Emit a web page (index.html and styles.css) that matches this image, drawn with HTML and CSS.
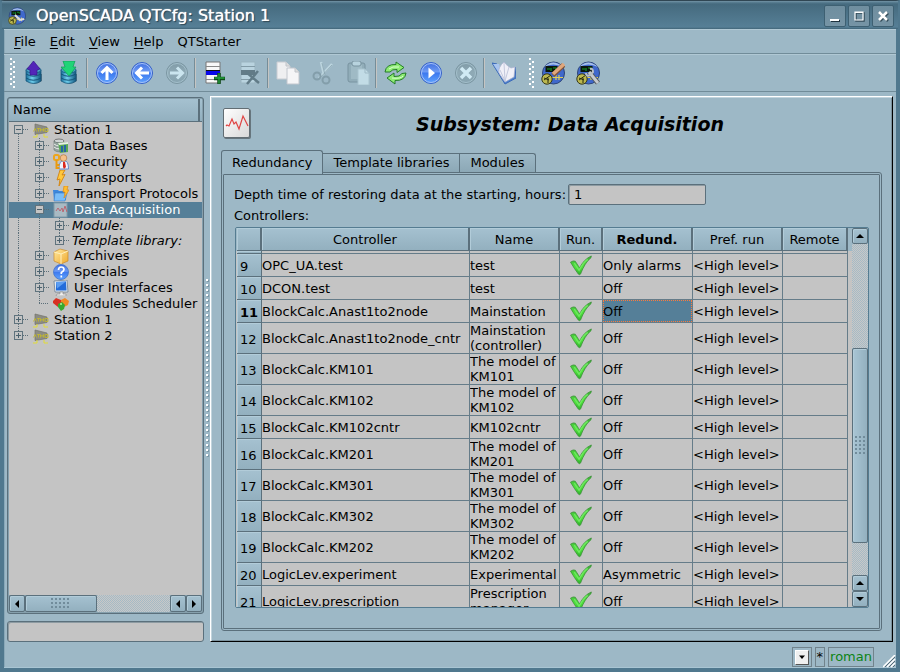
FILE: index.html
```html
<!DOCTYPE html>
<html lang="en">
<head>
<meta charset="utf-8">
<title>OpenSCADA QTCfg: Station 1</title>
<link rel="stylesheet" href="styles.css">
</head>
<body>
<svg class="defs" aria-hidden="true">
  <defs>
    <linearGradient id="gBlue" x1="0" y1="0" x2="0" y2="1"><stop offset="0" stop-color="#3c6ce0"/><stop offset=".45" stop-color="#6f9cf4"/><stop offset=".5" stop-color="#3d78ee"/><stop offset="1" stop-color="#5fa4ff"/></linearGradient>
    <linearGradient id="gDim" x1="0" y1="0" x2="0" y2="1"><stop offset="0" stop-color="#7f9aa6"/><stop offset=".5" stop-color="#8faab6"/><stop offset="1" stop-color="#86a3b0"/></linearGradient>
    <linearGradient id="gDb" x1="0" y1="0" x2="1" y2="0"><stop offset="0" stop-color="#176a96"/><stop offset=".4" stop-color="#6fd0ee"/><stop offset="1" stop-color="#12567e"/></linearGradient>
    <linearGradient id="gCheck" x1="0" y1="0" x2="0" y2="1"><stop offset="0" stop-color="#3fae3a"/><stop offset=".6" stop-color="#4fe23c"/><stop offset="1" stop-color="#2fae2c"/></linearGradient>
    <linearGradient id="gPaper" x1="0" y1="0" x2="1" y2="1"><stop offset="0" stop-color="#fff"/><stop offset="1" stop-color="#d8d8d8"/></linearGradient>
    <linearGradient id="gBox" x1="0" y1="0" x2="1" y2="1"><stop offset="0" stop-color="#ffe9a0"/><stop offset="1" stop-color="#f0a92c"/></linearGradient>
  </defs>
  <symbol id="check" viewBox="0 0 24 22"><path d="M1 7.500Q4 5.500 6 6.500L10.500 13.500Q15 4.500 22.800 1L22.500 2.800Q16 8 11.500 20Q10.500 21.300 9.200 20Q5.500 15 1 7.500Z" fill="url(#gCheck)" stroke="#3b8f37" stroke-width=".8"/><path d="M5 8.500L10 16Q14 8 19 4.500" fill="none" stroke="#6fe860" stroke-width="1.500"/></symbol>
  <symbol id="db" viewBox="0 0 24 24"><path d="M5 13v7q7.500 5.500 15 0v-7Z" fill="#2b4150" opacity=".6"/><path d="M4 9v11q8 5 15 0V9Z" fill="url(#gDb)" stroke="#1a5c80" stroke-width=".8"/><ellipse cx="11.500" cy="9" rx="7.500" ry="3" fill="#4aa0c4" stroke="#1a5c80" stroke-width=".8"/><path d="M4 13q7.500 4.500 15 0M4 17q7.500 4.500 15 0" fill="none" stroke="#145478"/></symbol>
  <symbol id="scada" viewBox="0 0 24 24"><circle cx="12.500" cy="12" r="11" fill="#3f68cc" stroke="#2e4577"/><path d="M3 6Q12 -3 22 6Q12 1 3 6" fill="#a6bfe8"/><rect x="4.500" y="5" width="12" height="6" fill="#0a160d"/><path d="M6 8h3M10 7v3M12 7h3v2" stroke="#159c2c" stroke-width="1.200"/><path d="M11 16.500h11M15 14v5M18 14v5" stroke="#dfcf58" stroke-width="1.200"/><circle cx="6" cy="18" r="5.200" fill="#bcb84f" stroke="#35381c"/><path d="M3 19L10 14M7 17v5M3 17l5 2" stroke="#25290f"/></symbol>
  <symbol id="station" viewBox="0 0 16 16"><path d="M2 2L14 5V10.500L2 12.500Z" fill="#8c8c84" stroke="#73736c" stroke-width=".7"/><path d="M.5 9.500l1.500-3 1.500 3M4 6.500h3M5.500 6.500v3M7.500 9.500v-3l1.500 2 1.500-2v3M12 6.500h3v3h-3z" fill="none" stroke="#c0b532" stroke-width=".9"/><path d="M0 15h4v-3M11 12v3h4" fill="none" stroke="#e2dc34"/></symbol>
  <symbol id="wave" viewBox="0 0 28 31"><rect x="1" y="1" width="27" height="30" rx="2" fill="#66757d"/><rect x=".5" y=".5" width="26" height="29" rx="1.500" fill="url(#gPaper)" stroke="#626d73"/><path d="M3 18l1-1 2 1 3-7 2 5 2-2 3 7 4-13 5 10" fill="none" stroke="#e04444" stroke-width="1.200"/></symbol>
</svg>

<div class="window">
<header class="titlebar">
  <svg class="app-icon"><use href="#scada"/><path d="M7 8l5 5 4-1" stroke="#ddd" stroke-width="2" fill="none"/></svg>
  <h1>OpenSCADA QTCfg: Station 1</h1>
  <button class="win-btn" aria-label="Minimize"><svg width="20" height="20"><path d="M6 15h9" stroke="#1f333f" stroke-width="2"/><path d="M5 14h9" stroke="#fff" stroke-width="2"/></svg></button>
  <button class="win-btn" aria-label="Maximize"><svg width="20" height="20"><path d="M7 7h8v8h-8z" stroke="#344c59" fill="none" stroke-width="1.500"/><path d="M6 6h8v8h-8zM5.500 6.500h9" stroke="#fff" fill="none" stroke-width="1.200"/></svg></button>
  <button class="win-btn" aria-label="Close"><svg width="20" height="20"><path d="M7 7l8 8M15 7l-8 8" stroke="#344c59" stroke-width="2.500"/><path d="M6 6l8 8M14 6l-8 8" stroke="#fff" stroke-width="2.500"/></svg></button>
</header>

<nav class="menubar">
  <button><u>F</u>ile</button><button><u>E</u>dit</button><button><u>V</u>iew</button><button><u>H</u>elp</button><button>QTStarter</button>
</nav>

<div class="toolbar" role="toolbar">
  <span class="handle"></span>
  <button aria-label="Load"><svg><use href="#db"/><path d="M11.500 0L18 8l-3 1v5H8V9L5 8Z" fill="#5325b8" stroke="#38178c" stroke-width=".7"/></svg></button>
  <button aria-label="Save"><svg><use href="#db"/><path d="M6 0h12l-2 6h3L12 15 4 6h4Z" fill="#1fd477" stroke="#109a58" stroke-width=".7"/></svg></button>
  <span class="sep"></span>
  <button aria-label="Up"><svg><circle cx="12" cy="12" r="10.500" fill="url(#gBlue)" stroke="#3762c8"/><circle cx="12" cy="12" r="9.500" fill="none" stroke="#a6c2f8"/><path d="M12 19V7M6.500 12L12 6.500 17.500 12" fill="none" stroke="#fff" stroke-width="3"/></svg></button>
  <button aria-label="Previous"><svg><circle cx="12" cy="12" r="10.500" fill="url(#gBlue)" stroke="#3762c8"/><circle cx="12" cy="12" r="9.500" fill="none" stroke="#a6c2f8"/><path d="M19 12H7M12 6.500L6.500 12 12 17.500" fill="none" stroke="#fff" stroke-width="3"/></svg></button>
  <button aria-label="Next"><svg><circle cx="12" cy="12" r="10.500" fill="url(#gDim)" stroke="#7b96a2"/><circle cx="12" cy="12" r="9.500" fill="none" stroke="#a3bfcb"/><path d="M5 12H17M12 6.500L17.500 12 12 17.500" fill="none" stroke="#cbe5ef" stroke-width="3"/></svg></button>
  <span class="sep"></span>
  <button aria-label="Add item"><svg><path d="M3 1h14v21H3z" fill="#f8f8f8" stroke="#777"/><path d="M3 5.500h14M3 18.500h14" stroke="#888"/><path d="M3 10h14v4H3z" fill="#0909e8"/><path d="M3 9.500h14" stroke="#111"/><path d="M16 12v11M11 17.500h11" stroke="#0c4a17" stroke-width="3.500"/><path d="M16 12.500v10M11.500 17h10" stroke="#25a33e" stroke-width="1.300"/></svg></button>
  <button aria-label="Delete item"><svg><path d="M3 1h14v21H3z" fill="#b9d3df" stroke="#9bb5c1"/><path d="M3 5.500h14M3 18.500h14" stroke="#829ba7"/><path d="M3 9h14v5H3z" fill="#627b87"/><path d="M8 11l13 11M20 10L9 23" stroke="#617b87" stroke-width="2.500"/></svg></button>
  <span class="sep"></span>
  <button aria-label="Copy"><svg><path d="M1 1h9l4 4v13H1z" fill="#efeff1" stroke="#c9ccd2"/><path d="M10 1v4h4" fill="#ddd" stroke="#c0c4ca"/><path d="M11 7h8l4 4v12H11z" fill="#f5f5f7" stroke="#c2c6cd"/><path d="M19 7v4h4" fill="#ddd" stroke="#c0c4ca"/></svg></button>
  <button aria-label="Cut"><svg><path d="M10 1l3 13M21 3L8 17" stroke="#bcd5df" stroke-width="2.500"/><path d="M11 2l3 12M21 4L9 17" stroke="#819ca8" stroke-width=".7"/><circle cx="6" cy="15" r="3.500" fill="none" stroke="#839eaa" stroke-width="2"/><circle cx="15" cy="19" r="3.500" fill="none" stroke="#839eaa" stroke-width="2"/></svg></button>
  <button aria-label="Paste"><svg><rect x="2" y="2" width="17" height="19" rx="2" fill="#91adb9" stroke="#7893a0"/><rect x="5" y="4" width="11" height="14" fill="#9fbac5"/><rect x="6" y="0" width="9" height="5" rx="2" fill="#b8d3de" stroke="#7893a0"/><path d="M12 8h7l4 4v12H12z" fill="#c2dce6" stroke="#a9c4cf"/><path d="M19 8v4h4" fill="none" stroke="#9fbac6"/></svg></button>
  <span class="sep"></span>
  <button aria-label="Refresh"><svg><path d="M1 11Q2 3 12 3.500V1l8 5.500-7 5V8.500Q8 8 6 11Z" fill="#8fec74" stroke="#247d28"/><path d="M22 12Q21 20 11 19.500V23L3 17l7-5V15.500Q16 16 18 12.500Z" fill="#8fec74" stroke="#247d28"/><path d="M5 8q3-3 10-2M19 15q-2 3-11 2" fill="none" stroke="#d7ffd0"/></svg></button>
  <button aria-label="Start"><svg><circle cx="12" cy="12" r="10.500" fill="url(#gBlue)" stroke="#3762c8"/><circle cx="12" cy="12" r="9.500" fill="none" stroke="#a6c2f8"/><path d="M9.500 6.500L16 12l-6.500 5.500Z" fill="#fff"/></svg></button>
  <button aria-label="Stop"><svg><circle cx="12" cy="12" r="10.500" fill="url(#gDim)" stroke="#7b96a2"/><circle cx="12" cy="12" r="9.500" fill="none" stroke="#a3bfcb"/><path d="M7 7l10 10M17 7L7 17" stroke="#d0eaf4" stroke-width="3.500"/></svg></button>
  <span class="sep"></span>
  <button aria-label="Manual"><svg><path d="M0 2l5 1L12 20l10-4 1-10 1 11-11 6Z" fill="#4f83cf" stroke="#3b69b8"/><path d="M1 3l6 0 5 17Z" fill="#a9c5ee"/><path d="M12 1Q6 6 7 12l6 9 9-5 1-10-4 1Q16 6 12 1Z" fill="#f0f0f8" stroke="#aab2cf" stroke-width=".7"/><path d="M12 2l1 18M17 6l-4 14M8 9l5 11" fill="none" stroke="#c4c9de"/></svg></button>
  <span class="handle second"></span>
  <button aria-label="Open drawing editor"><svg><use href="#scada" width="24" height="24"/><path d="M22.500 4L12 14" stroke="#805439" stroke-width="5"/><path d="M23 3L12 13" stroke="#e0a77c" stroke-width="3.500"/></svg></button>
  <button aria-label="Open configurator"><svg><use href="#scada" width="24" height="24"/><path d="M13 11l9 11" stroke="#54585c" stroke-width="5"/><path d="M13 11l9 11" stroke="#c4c9ce" stroke-width="3"/><path d="M10 12q0 4 4 2l3-3q0-4-3-3" fill="none" stroke="#b9bec3" stroke-width="2"/></svg></button>
</div>

<main class="workspace">
  <aside class="sidebar">
    <div class="tree-frame">
      <div class="tree-head"><span>Name</span></div>
      <ul class="tree">
        <li><span class="exp first open"></span><svg><use href="#station"/></svg>Station 1</li>
        <li><i></i><span class="exp"></span><svg><ellipse cx="6" cy="3" rx="5" ry="2" fill="#d0d5d5" stroke="#777"/><path d="M1 3v9q2 2 6 2V5Q3 5 1 3Z" fill="#92a39d" stroke="#6b7774" stroke-width=".6"/><path d="M1 6q2 2 6 2M1 9q2 2 6 2" stroke="#eee" fill="none"/><path d="M5 5l10-1v10l-8 1Z" fill="#59a955"/><path d="M5 5l10-1v2L6 7Z" fill="#e8efe5"/><path d="M9 8v6M12 7v7" stroke="#2765a5" stroke-width="2"/></svg>Data Bases</li>
        <li><i></i><span class="exp"></span><svg><path d="M6 15q0-9 5-8 4.500-1 4.500 8Z" fill="#f5f5fb" stroke="#668acd"/><circle cx="10.500" cy="4" r="3.300" fill="#f5c088" stroke="#a66b36" stroke-width=".6"/><path d="M10 8h2l1 5-2 2-1-2Z" fill="#db2a20"/><rect x="1" y="1" width="5" height="5" rx="1.500" fill="none" stroke="#eda51c" stroke-width="2"/><path d="M3.500 6v9M3.500 11h3M3.500 14h3" stroke="#e99a10" stroke-width="2"/></svg>Security</li>
        <li><i></i><span class="exp"></span><svg><path d="M7 0h5L9 5l3-.5L6 16l1-7-3 1Z" fill="#ffc83c" stroke="#d28211" stroke-width=".9"/></svg>Transports</li>
        <li><i></i><span class="exp"></span><svg><path d="M0 4h5l1 1h7v9H1Z" fill="#3b87dc"/><path d="M2 7h12l-2 8H1Z" fill="#79bdf8" stroke="#3878c5" stroke-width=".6"/><path d="M11 0h4l-1 4h2l-5 8 1-6h-2Z" fill="#ffbe31" stroke="#db8b17" stroke-width=".7"/></svg>Transport Protocols</li>
        <li class="selected"><i></i><span class="exp open"></span><svg><rect x="1" y="1" width="13" height="14" fill="#a9bac3" stroke="#809aa8"/><path d="M3 9l2-3 2 3 2-3 1 4 2-6 2 6" fill="none" stroke="#ba6672"/></svg>Data Acquisition</li>
        <li class="sub"><i></i><i></i><span class="exp"></span>Module:</li>
        <li class="sub"><i></i><i></i><span class="exp last"></span>Template library:</li>
        <li><i></i><span class="exp"></span><svg><path d="M1 4l6-3 8 2v10l-7 3-7-3Z" fill="url(#gBox)" stroke="#c9892a" stroke-width=".7"/><path d="M1 4l7 2 7-3M8 6v10" fill="none" stroke="#fff0bd"/></svg>Archives</li>
        <li><i></i><span class="exp"></span><svg viewBox="0 0 16 16"><circle cx="8" cy="8" r="7.500" fill="url(#gBlue)" stroke="#4173c9" stroke-width=".8"/><path d="M5.500 6q0-3 2.700-3Q11 3 11 5.500 11 7 8.300 8.500V10M8.300 11.500v2" fill="none" stroke="#fff" stroke-width="1.700"/></svg>Specials</li>
        <li><i></i><span class="exp"></span><svg><path d="M1 1l13-1 1 12H2Z" fill="#e4ebf2" stroke="#617487" stroke-width=".7"/><path d="M3 2l10-.5.500 9H3Z" fill="#236cda"/><path d="M3 2l10-.5-9 7Z" fill="#5c9df1"/><path d="M7 12h3v2h3v2H3l1-2h3Z" fill="#eee" stroke="#777" stroke-width=".5"/></svg>User Interfaces</li>
        <li><i></i><span class="exp leaf last"></span><svg><path d="M0 5l3-3 5 2v5l-3 2-5-4Z" fill="#d83022"/><path d="M8 4l4-2 4 3-1 4-4 2-3-3Z" fill="#f18822"/><path d="M5 8l4-2 3 3-1 4-3 2-3-4Z" fill="#36a92f"/><circle cx="8" cy="8" r="1" fill="#b5f29c"/></svg>Modules Scheduler</li>
        <li><span class="exp"></span><svg><use href="#station"/></svg>Station 1</li>
        <li><span class="exp last"></span><svg><use href="#station"/></svg>Station 2</li>
      </ul>
      <div class="hscroll">
        <button aria-label="Scroll left"><svg viewBox="0 0 8 8"><path d="M6 0v8L2 4Z"/></svg></button>
        <span class="thumb"><span class="grip"></span></span><span class="track"></span>
        <button aria-label="Scroll left"><svg viewBox="0 0 8 8"><path d="M6 0v8L2 4Z"/></svg></button>
        <button aria-label="Scroll right"><svg viewBox="0 0 8 8"><path d="M2 0v8l4-4Z"/></svg></button>
      </div>
    </div>
    <input class="search" type="text" aria-label="Search">
  </aside>
  <div class="splitter"></div>

  <section class="panel">
    <div class="heading"><svg><use href="#wave"/></svg><h2>Subsystem: Data Acquisition</h2></div>
    <div class="tabs" role="tablist">
      <button class="active" role="tab">Redundancy</button><button role="tab">Template libraries</button><button role="tab">Modules</button>
    </div>
    <div class="pane">
      <div class="field"><label for="depth">Depth time of restoring data at the starting, hours:</label><input id="depth" type="text" value="1"></div>
      <div class="caption">Controllers:</div>
      <div class="grid-frame">
        <div class="grid-view">
        <table>
          <colgroup><col class="c-num"><col class="c-ctl"><col class="c-name"><col class="c-run"><col class="c-red"><col class="c-pref"><col class="c-rem"></colgroup>
          <thead><tr><th></th><th>Controller</th><th>Name</th><th>Run.</th><th class="current">Redund.</th><th>Pref. run</th><th>Remote</th></tr></thead>
          <tbody>
            <tr class="sliver"><th></th><td></td><td></td><td></td><td></td><td></td><td></td></tr>
            <tr><th>9</th><td>OPC_UA.test</td><td>test</td><td><svg><use href="#check"/></svg></td><td>Only alarms</td><td>&lt;High level&gt;</td><td></td></tr>
            <tr><th>10</th><td>DCON.test</td><td>test</td><td></td><td>Off</td><td>&lt;High level&gt;</td><td></td></tr>
            <tr><th class="current">11</th><td>BlockCalc.Anast1to2node</td><td>Mainstation</td><td><svg><use href="#check"/></svg></td><td class="cell-on"><span>Off</span></td><td>&lt;High level&gt;</td><td></td></tr>
            <tr class="tall"><th>12</th><td>BlockCalc.Anast1to2node_cntr</td><td>Mainstation<br>(controller)</td><td><svg><use href="#check"/></svg></td><td>Off</td><td>&lt;High level&gt;</td><td></td></tr>
            <tr class="tall"><th>13</th><td>BlockCalc.KM101</td><td>The model of<br>KM101</td><td><svg><use href="#check"/></svg></td><td>Off</td><td>&lt;High level&gt;</td><td></td></tr>
            <tr class="tall"><th>14</th><td>BlockCalc.KM102</td><td>The model of<br>KM102</td><td><svg><use href="#check"/></svg></td><td>Off</td><td>&lt;High level&gt;</td><td></td></tr>
            <tr><th>15</th><td>BlockCalc.KM102cntr</td><td>KM102cntr</td><td><svg><use href="#check"/></svg></td><td>Off</td><td>&lt;High level&gt;</td><td></td></tr>
            <tr class="tall"><th>16</th><td>BlockCalc.KM201</td><td>The model of<br>KM201</td><td><svg><use href="#check"/></svg></td><td>Off</td><td>&lt;High level&gt;</td><td></td></tr>
            <tr class="tall"><th>17</th><td>BlockCalc.KM301</td><td>The model of<br>KM301</td><td><svg><use href="#check"/></svg></td><td>Off</td><td>&lt;High level&gt;</td><td></td></tr>
            <tr class="tall"><th>18</th><td>BlockCalc.KM302</td><td>The model of<br>KM302</td><td><svg><use href="#check"/></svg></td><td>Off</td><td>&lt;High level&gt;</td><td></td></tr>
            <tr class="tall"><th>19</th><td>BlockCalc.KM202</td><td>The model of<br>KM202</td><td><svg><use href="#check"/></svg></td><td>Off</td><td>&lt;High level&gt;</td><td></td></tr>
            <tr><th>20</th><td>LogicLev.experiment</td><td>Experimental</td><td><svg><use href="#check"/></svg></td><td>Asymmetric</td><td>&lt;High level&gt;</td><td></td></tr>
            <tr class="tall"><th>21</th><td>LogicLev.prescription</td><td>Prescription<br>manager</td><td><svg><use href="#check"/></svg></td><td>Off</td><td>&lt;High level&gt;</td><td></td></tr>
          </tbody>
        </table>
        </div>
        <div class="vscroll">
          <button aria-label="Scroll up"><svg viewBox="0 0 8 8"><path d="M0 6h8L4 2Z"/></svg></button>
          <span class="track before"></span><span class="thumb"><span class="grip"></span></span><span class="track after"></span>
          <button aria-label="Scroll up"><svg viewBox="0 0 8 8"><path d="M0 6h8L4 2Z"/></svg></button>
          <button aria-label="Scroll down"><svg viewBox="0 0 8 8"><path d="M0 2h8L4 6Z"/></svg></button>
        </div>
      </div>
    </div>
  </section>
</main>

<footer class="statusbar">
  <span class="cell"><button aria-label="Style"><svg viewBox="0 0 8 8"><path d="M1 2.500h6L4 6Z"/></svg></button></span>
  <span class="cell">*</span>
  <span class="cell user">roman</span>
  <svg class="resize"><path d="M0 12L12 0M4 12l8-8M8 12l4-4" stroke="#fff" stroke-width="1.500"/><path d="M2 12L12 2M6 12l6-6M10 12l2-2" stroke="#566c78"/></svg>
</footer>
</div>
</body>
</html>
```
FILE: styles.css
```css
:root {
  --bg: #9db8c6;
  --base: #c4c4c4;
  --line: #657c89;
  --edge: #5b707c;
  --sel: #557f98;
  --raised: linear-gradient(#a5c1d0, #93b0bf);
}
* { box-sizing: border-box; }
body {
  margin: 0;
  background: #1d3846;
  color: #000;
  font: 13px/16px "DejaVu Sans", sans-serif;
}
button, input {
  font: inherit;
  color: inherit;
  margin: 0;
  padding: 0;
  border: 0;
  border-radius: 0;
  background: none;
}
svg { display: block; flex: none; }
.defs { position: absolute; width: 0; height: 0; }

.window {
  display: flex;
  flex-direction: column;
  height: 100vh;
  background: var(--bg);
  border: solid #50788e;
  border-width: 1px 4px 4px;
  border-top-color: #304653;
  box-shadow: inset 0 -1px #a9c5d3, inset 1px 0 #89a8b8;
}

.titlebar {
  display: flex;
  align-items: center;
  gap: 2px;
  height: 28px;
  padding: 2px 4px 0 6px;
  margin: 0 -2px;
  flex: none;
  background: linear-gradient(#7797a8 0, #5d8195 1px, #456a7e 3px, #567f96 26px, #416578);
  color: #fff;
}
.app-icon { width: 18px; height: 18px; margin: 0 8px 0 0; }
.app-icon use { width: 17px; height: 17px; }
.titlebar h1 {
  flex: 1;
  margin: 0;
  font-size: 16px;
  font-weight: normal;
  text-shadow: 0 0 1px #fff, 1px 1px 1px #1c3440;
}
.win-btn {
  width: 22px;
  height: 22px;
  border: 1px solid #3e6072;
  border-radius: 2px;
  background: linear-gradient(#6f8e9f, #7694a5);
}

.menubar {
  display: flex;
  flex: none;
  height: 25px;
  padding: 2px 3px 0;
  border-bottom: 1px solid #718c99;
  box-shadow: inset 0 1px #b0c8d4;
}
.menubar button { padding: 0 7px; }
.menubar u { text-underline-offset: 2px; }

.toolbar {
  display: flex;
  align-items: center;
  flex: none;
  height: 38px;
  padding-left: 6px;
  border-bottom: 1px solid #718c99;
  box-shadow: inset 0 1px #b0c8d4;
}
.toolbar button { width: 35px; height: 34px; }
.toolbar svg { width: 24px; height: 24px; margin: 0 auto; }
.handle {
  width: 6px;
  height: 30px;
  background:
    conic-gradient(from 270deg at 2px 2px, #fff 90deg, transparent 0) 0 0 / 6px 5px,
    conic-gradient(from 270deg at 2px 2px, #fff 90deg, transparent 0) 3px 3px / 6px 5px;
}
.handle.second { margin-left: 8px; }
.sep {
  width: 3px;
  height: 30px;
  border-left: 1px solid #768d98;
  box-shadow: inset 1px 0 #c5c5c3;
}

.workspace { display: flex; flex: 1; min-height: 0; padding: 4px 3px 0; }
.sidebar { display: flex; flex-direction: column; width: 197px; flex: none; padding-top: 1px; }
.tree-frame {
  display: flex;
  flex-direction: column;
  flex: 1;
  min-height: 0;
  border: 1px solid var(--edge);
  border-radius: 3px;
  padding: 1px;
  background: #86a0ad;
}
.tree-head {
  flex: none;
  height: 23px;
  padding-right: 2px;
  background: var(--raised);
  border-bottom: 1px solid var(--edge);
}
.tree-head span {
  display: block;
  height: 22px;
  padding: 3px 4px;
  border-right: 2px solid var(--edge);
}
.tree { flex: 1; min-height: 0; overflow: hidden; margin: 0; padding: 0; list-style: none; background: var(--base); }
.tree li { display: flex; height: 16px; align-items: center; white-space: nowrap; }
.tree li > svg { width: 16px; height: 16px; margin: 0 5px 0 4px; }
.tree .sub { height: 15px; font-style: italic; }
.tree .sub .exp { margin-right: 3px; }
.tree .selected { background: var(--sel); color: #fff; }
.tree i, .exp {
  width: 20px;
  align-self: stretch;
  flex: none;
  background: repeating-linear-gradient(#5c6f79 0 1px, transparent 1px 2px) 10px 0 / 1px 100% no-repeat;
}
.tree .selected i { background: none; }
.exp {
  background:
    linear-gradient(#4c626e, #4c626e) 8px 7px / 5px 1px no-repeat,
    linear-gradient(#4c626e, #4c626e) 10px 5px / 1px 5px no-repeat,
    linear-gradient(var(--base), var(--base)) 7px 4px / 7px 7px no-repeat,
    linear-gradient(#60737d, #60737d) 6px 3px / 9px 9px no-repeat,
    repeating-linear-gradient(90deg, #5c6f79 0 1px, transparent 1px 2px) 15px 7px / 5px 1px no-repeat,
    repeating-linear-gradient(#5c6f79 0 1px, transparent 1px 2px) 10px 0 / 1px 100% no-repeat;
}
.tree li > i:first-child, .tree li > .exp:first-child { margin-left: -1px; width: 21px; }
.exp.last { background-size: 5px 1px, 1px 5px, 7px 7px, 9px 9px, 5px 1px, 1px 8px; }
.exp.open { background-size: 5px 1px, 0 0, 7px 7px, 9px 9px, 5px 1px, 1px 100%; }
.exp.first { background-position: 8px 7px, 0 0, 7px 4px, 6px 3px, 15px 7px, 10px 8px; }
.exp.leaf { background-size: 0 0, 0 0, 0 0, 0 0, 10px 1px, 1px 8px; background-position: 0 0, 0 0, 0 0, 0 0, 10px 7px, 10px 0; }

.hscroll { display: flex; flex: none; height: 17px; }
.hscroll button, .vscroll button, .thumb {
  display: flex;
  align-items: center;
  justify-content: center;
  flex: none;
  border: 1px solid var(--edge);
  border-radius: 2px;
  background: var(--raised);
  box-shadow: inset 1px 1px #b2ccd9;
}
.hscroll button { width: 16px; }
.hscroll .thumb { flex: 71 1 0; }
.hscroll .track { flex: 75 1 0; }
.hscroll button svg, .vscroll button svg { width: 8px; height: 8px; }
.track { background: repeating-conic-gradient(#c8c8c8 0 25%, #a5bac5 0 50%) 0 0 / 2px 2px; }
.grip {
  width: 19px;
  height: 11px;
  background: conic-gradient(from 270deg at 2px 2px, #718c9b 90deg, transparent 0) 0 0 / 4px 4px;
}
.search {
  flex: none;
  width: 100%;
  height: 21px;
  margin-top: 7px;
  border: 1px solid var(--edge);
  border-radius: 3px;
  background: var(--base);
  box-shadow: inset 1px 1px #8d9ba2;
}
.splitter {
  width: 6px;
  height: 180px;
  align-self: center;
  flex: none;
  background:
    conic-gradient(from 270deg at 2px 2px, #fff 90deg, transparent 0) 2px 0 / 6px 5px repeat-y,
    conic-gradient(from 270deg at 2px 2px, #7d98a6 90deg, transparent 0) 3px 1px / 6px 5px repeat-y;
}

.panel {
  display: flex;
  flex-direction: column;
  flex: 1;
  min-width: 0;
  border: 1px solid;
  border-color: #fff #000 #000 #fff;
  padding: 11px 10px 10px;
  box-shadow: inset 1px 1px #c1d4dd, inset -1px -1px #7c929e;
}
.heading { display: flex; align-items: center; gap: 7px; flex: none; height: 31px; padding-left: 2px; }
.heading svg { width: 28px; height: 31px; }
.heading h2 { flex: 1; margin: 0; text-align: center; font-size: 19px; line-height: 24px; font-style: italic; font-weight: bold; }
.tabs { display: flex; flex: none; align-items: flex-end; height: 33px; }
.tabs button {
  height: 19px;
  padding: 0 10px;
  border: 1px solid var(--edge);
  border-left: 0;
  border-bottom: 0;
  background: linear-gradient(#9db8c6, #8ca8b6);
}
.tabs button:last-child { border-top-right-radius: 3px; }
.tabs .active {
  position: relative;
  height: 24px;
  margin-bottom: -2px;
  border-left: 1px solid var(--edge);
  border-radius: 3px 3px 0 0;
  background: var(--bg);
}
.pane {
  display: flex;
  flex-direction: column;
  flex: 1;
  min-height: 0;
  padding: 9px 10px 20px;
  border: 3px double var(--edge);
  border-radius: 3px;
}
.field { display: flex; align-items: center; gap: 2px; flex: none; }
.field input {
  width: 138px;
  height: 21px;
  padding: 0 5px;
  border: 1px solid var(--edge);
  border-radius: 2px;
  background: var(--base);
  box-shadow: inset 1px 1px #8d9ba2;
}
.caption { flex: none; margin: 3px 0; }
.grid-frame {
  display: flex;
  flex: 1;
  min-height: 0;
  margin-left: 1px;
  border: 1px solid #557c91;
  border-radius: 2px;
}
.grid-view { flex: 1; min-width: 0; overflow: hidden; background: linear-gradient(var(--bg) 23px, var(--base) 23px); padding-left: 1px; }
table { table-layout: fixed; width: 611px; border-collapse: separate; border-spacing: 0; line-height: 15px; }
.c-num { width: 25px; } .c-ctl { width: 208px; } .c-name, .c-red, .c-pref { width: 90px; } .c-run { width: 43px; } .c-rem { width: 65px; }
th, td { padding: 0; border: solid var(--line); border-width: 0 1px 1px 0; white-space: nowrap; overflow: hidden; }
th { background: var(--raised); font-weight: normal; box-shadow: inset 1px 1px #b2ccd9; border-color: var(--edge); }
thead th { height: 23px; padding-top: 1px; border-right-width: 2px; }
tbody th { text-align: left; padding: 2px 0 0 3px; }
th.current { font-weight: bold; }
td { height: 23px; text-align: left; }
.tall td { height: 31px; }
tr.sliver th, tr.sliver td { height: 3px; padding: 0; }
td svg { width: 24px; height: 21px; margin: 0 auto; }
.cell-on { background: var(--sel); }
.cell-on span { display: block; height: 22px; line-height: 21px; border: 1px dotted #ff7a3a; text-indent: -1px; }
.vscroll { display: flex; flex-direction: column; flex: none; width: 16px; }
.vscroll button { height: 16px; }
.vscroll .before { flex: 104 1 0; }
.vscroll .thumb { flex: 194 1 0; background: linear-gradient(90deg, #a9c5d4, #93b0bf); }
.vscroll .after { flex: 32 1 0; }
.vscroll .grip { width: 11px; height: 19px; }

.statusbar { display: flex; align-items: center; justify-content: flex-end; gap: 3px; flex: none; height: 26px; padding-top: 4px; }
.statusbar .cell { display: flex; align-items: center; justify-content: center; height: 20px; padding: 0 1px; border: 1px solid #71838c; }
.statusbar button { width: 14px; height: 15px; margin: 0 1px; background: #efefef; border: 1px solid; border-color: #fff #555 #555 #fff; }
.statusbar button svg { width: 8px; height: 8px; margin: auto; }
.statusbar .user { color: #0c8415; }
.resize { width: 13px; height: 13px; margin-left: 6px; align-self: flex-end; }
```
